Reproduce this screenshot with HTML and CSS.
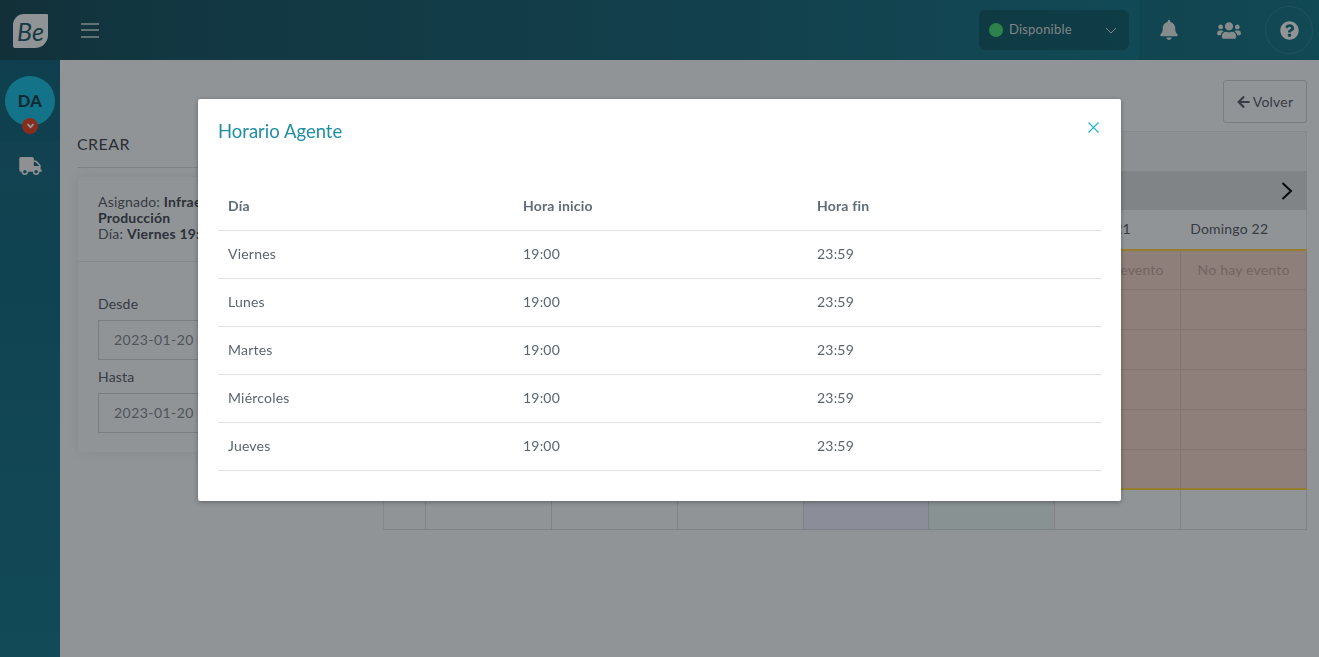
FILE: index.html
```html
<!DOCTYPE html>
<html lang="es">
<head>
<meta charset="utf-8">
<title>Horario Agente</title>
<link rel="stylesheet" href="styles.css">
</head>
<body>
<div class="app">
  <header class="topbar">
    <div class="brand">
      <div class="logo"><span>Be</span></div>
      <button class="burger" aria-label="Menú"><i></i><i></i><i></i></button>
    </div>
    <div class="status">
      <span class="dot"></span>
      <span class="status-label">Disponible</span>
      <svg class="status-caret" viewBox="0 0 12 7"><path d="M1 1l5 5 5-5" fill="none" stroke="currentColor" stroke-width="1"/></svg>
    </div>
    <div class="top-icons">
      <div class="top-icon"><svg class="ic-bell" viewBox="0 0 448 512"><path fill="currentColor" d="M224 512c35.32 0 63.97-28.65 63.97-64H160.03c0 35.35 28.65 64 63.97 64zm215.39-149.71c-19.32-20.76-55.47-51.99-55.47-154.29 0-77.7-54.48-139.9-127.94-155.16V32c0-17.67-14.32-32-31.98-32s-31.98 14.33-31.98 32v20.84C118.56 68.1 64.08 130.3 64.08 208c0 102.3-36.15 133.53-55.47 154.29-6 6.45-8.66 14.16-8.61 21.71.11 16.4 12.98 32 32.1 32h383.8c19.12 0 32-15.6 32.1-32 .05-7.55-2.61-15.27-8.61-21.71z"/></svg></div>
      <div class="top-icon"><svg class="ic-users" viewBox="0 0 640 512"><path fill="currentColor" d="M96 224c35.3 0 64-28.7 64-64s-28.7-64-64-64-64 28.7-64 64 28.7 64 64 64zm448 0c35.3 0 64-28.7 64-64s-28.7-64-64-64-64 28.7-64 64 28.7 64 64 64zm32 32h-64c-17.6 0-33.5 7.1-45.1 18.6 40.3 22.1 68.9 62 75.1 109.4h66c17.7 0 32-14.3 32-32v-32c0-35.3-28.7-64-64-64zm-256 0c61.9 0 112-50.1 112-112S381.9 32 320 32 208 82.1 208 144s50.1 112 112 112zm76.8 32h-8.3c-20.8 10-43.9 16-68.5 16s-47.6-6-68.5-16h-8.3C179.6 288 128 339.6 128 403.2V432c0 26.5 21.5 48 48 48h288c26.5 0 48-21.5 48-48v-28.8c0-63.6-51.6-115.2-115.2-115.2zm-223.7-13.4C161.5 263.1 145.6 256 128 256H64c-35.3 0-64 28.7-64 64v32c0 17.7 14.3 32 32 32h65.9c6.3-47.4 34.9-87.3 75.2-109.4z"/></svg></div>
      <div class="top-icon help"><svg class="ic-help" viewBox="0 0 512 512"><path fill="currentColor" d="M504 256c0 136.997-111.043 248-248 248S8 392.997 8 256C8 119.083 119.043 8 256 8s248 111.083 248 248zM262.655 90c-54.497 0-89.255 22.957-116.549 63.758-3.536 5.286-2.353 12.415 2.715 16.258l34.699 26.31c5.205 3.947 12.621 3.008 16.665-2.122 17.864-22.658 30.113-35.797 57.303-35.797 20.429 0 45.698 13.148 45.698 32.958 0 14.976-12.363 22.667-32.534 33.976C247.128 238.528 216 254.941 216 296v4c0 6.627 5.373 12 12 12h56c6.627 0 12-5.373 12-12v-1.333c0-28.462 83.186-29.647 83.186-106.667 0-58.002-60.165-102-116.531-102zM256 338c-25.365 0-46 20.635-46 46 0 25.364 20.635 46 46 46s46-20.636 46-46c0-25.365-20.635-46-46-46z"/></svg></div>
    </div>
  </header>
  <div class="shell">
    <nav class="sidebar">
      <div class="avatar">DA
        <span class="avatar-badge"><svg viewBox="0 0 12 8"><path d="M2 1.500l4 4 4-4" fill="none" stroke="currentColor" stroke-width="2.400"/></svg></span>
      </div>
      <div class="side-item"><svg class="ic-truck" viewBox="0 0 640 512"><path fill="currentColor" d="M624 352h-16V243.900c0-12.700-5.100-24.900-14.100-33.900L494 110.100c-9-9-21.200-14.100-33.900-14.100H416V48c0-26.500-21.500-48-48-48H48C21.500 0 0 21.500 0 48v320c0 26.500 21.500 48 48 48h16c0 53 43 96 96 96s96-43 96-96h128c0 53 43 96 96 96s96-43 96-96h48c8.800 0 16-7.200 16-16v-32c0-8.800-7.200-16-16-16zM160 464c-26.500 0-48-21.500-48-48s21.500-48 48-48 48 21.500 48 48-21.500 48-48 48zm320 0c-26.500 0-48-21.500-48-48s21.500-48 48-48 48 21.500 48 48-21.500 48-48 48zm80-208H416V144h44.100l99.900 99.900V256z"/></svg></div>
    </nav>
    <main class="main">
      <div class="main-actions">
        <button class="back-btn"><svg class="ic-arrow" viewBox="0 0 448 512"><path fill="currentColor" d="M257.500 445.100l-22.200 22.200c-9.400 9.400-24.600 9.400-33.900 0L7 273c-9.400-9.400-9.400-24.600 0-33.900L201.400 44.700c9.400-9.400 24.600-9.400 33.900 0l22.200 22.200c9.500 9.500 9.300 25-.4 34.300L136.600 216H424c13.300 0 24 10.700 24 24v32c0 13.300-10.700 24-24 24H136.600l120.500 114.800c9.800 9.300 10 24.800.4 34.300z"/></svg>Volver</button>
      </div>
      <div class="columns">
        <section class="create">
          <h2 class="create-title">CREAR</h2>
          <div class="create-card">
            <div class="card-info">Asignado: <b>Infraestructura</b><br><b>Producción</b><br>Día: <b>Viernes 19:00</b></div>
            <div class="card-form">
              <label class="field-label">Desde</label>
              <div class="field">2023-01-20 19:00</div>
              <label class="field-label">Hasta</label>
              <div class="field">2023-01-20 23:59</div>
            </div>
          </div>
        </section>
        <section class="calendar">
          <div class="cal-title"></div>
          <div class="cal-nav"><svg class="ic-next" viewBox="0 0 12 20"><path d="M1.500 2l8.500 8-8.500 8" fill="none" stroke="currentColor" stroke-width="2"/></svg></div>
          <div class="cal-grid">
            <div class="cal-head"></div><div class="cal-head">Lunes 16</div><div class="cal-head">Martes 17</div><div class="cal-head">Miércoles 18</div><div class="cal-head">Jueves 19</div><div class="cal-head">Viernes 20</div><div class="cal-head">Sábado 21</div><div class="cal-head">Domingo 22</div>
          </div>
          <div class="cal-grid cal-band">
            <div class="cell"></div><div class="cell">No hay evento</div><div class="cell">No hay evento</div><div class="cell">No hay evento</div><div class="cell">No hay evento</div><div class="cell">No hay evento</div><div class="cell">No hay evento</div><div class="cell">No hay evento</div>
            <div class="cell"></div><div class="cell"></div><div class="cell"></div><div class="cell"></div><div class="cell"></div><div class="cell"></div><div class="cell"></div><div class="cell"></div>
            <div class="cell"></div><div class="cell"></div><div class="cell"></div><div class="cell"></div><div class="cell"></div><div class="cell"></div><div class="cell"></div><div class="cell"></div>
            <div class="cell"></div><div class="cell"></div><div class="cell"></div><div class="cell"></div><div class="cell"></div><div class="cell"></div><div class="cell"></div><div class="cell"></div>
            <div class="cell"></div><div class="cell"></div><div class="cell"></div><div class="cell"></div><div class="cell"></div><div class="cell"></div><div class="cell"></div><div class="cell"></div>
            <div class="cell"></div><div class="cell"></div><div class="cell"></div><div class="cell"></div><div class="cell"></div><div class="cell"></div><div class="cell"></div><div class="cell"></div>
          </div>
          <div class="cal-grid">
            <div class="cell"></div><div class="cell"></div><div class="cell"></div><div class="cell"></div><div class="cell tint-blue"></div><div class="cell tint-green"></div><div class="cell"></div><div class="cell"></div>
          </div>
        </section>
      </div>
    </main>
  </div>
</div>
<div class="backdrop">
  <div class="modal" role="dialog">
    <div class="modal-head">
      <h3 class="modal-title">Horario Agente</h3>
      <svg class="modal-close" viewBox="0 0 11 11"><path d="M.5.5l10 10M10.500.5l-10 10" fill="none" stroke="currentColor" stroke-width="1.200"/></svg>
    </div>
    <table class="hours">
      <thead><tr><th>Día</th><th>Hora inicio</th><th>Hora fin</th></tr></thead>
      <tbody>
        <tr><td>Viernes</td><td>19:00</td><td>23:59</td></tr>
        <tr><td>Lunes</td><td>19:00</td><td>23:59</td></tr>
        <tr><td>Martes</td><td>19:00</td><td>23:59</td></tr>
        <tr><td>Miércoles</td><td>19:00</td><td>23:59</td></tr>
        <tr><td>Jueves</td><td>19:00</td><td>23:59</td></tr>
      </tbody>
    </table>
  </div>
</div>
</body>
</html>
```

FILE: styles.css
```css
* { box-sizing: border-box; }
html, body { margin: 0; height: 100%; overflow: hidden; }
body { font-family: "Lato", "Noto Sans", sans-serif; font-size: 14px; letter-spacing: .2px; color: #5a6470; background: #f2f7fc; }
svg { display: block; }
button { font: inherit; letter-spacing: inherit; background: none; padding: 0; }

.app { display: flex; flex-direction: column; height: 657px; }

.topbar { height: 60px; flex: none; display: flex; align-items: center; background: linear-gradient(90deg, #1e505e 0, #1f5b6c 10%, #1e6a7e 50%, #1f8296 100%); }
.brand { display: flex; align-items: center; flex: 1; padding-left: 13px; }
.logo { width: 35px; height: 34px; margin-top: 2px; background: #f2f7fc; border-radius: 11px 1px 13px 2px; display: flex; align-items: center; justify-content: center; }
.logo span { font-style: italic; font-size: 25px; letter-spacing: 0; color: #2a5f70; line-height: 1; }
.burger { margin-left: 33px; width: 18px; border: 0; display: flex; flex-direction: column; gap: 4.500px; }
.burger i { display: block; height: 2px; background: #fff; opacity: .6; }

.status { width: 150px; height: 40px; border-radius: 6px; background: rgba(0,0,0,.17); display: flex; align-items: center; padding: 0 12px 0 10px; margin-right: 10px; color: #d4dcdf; }
.dot { width: 14px; height: 14px; border-radius: 50%; background: #4bd97f; margin-top: -1px; }
.status-label { margin-left: 6px; flex: 1; font-size: 13px; margin-top: -2px; }
.status-caret { width: 12px; height: 7px; }
.top-icons { width: 180px; height: 60px; display: flex; align-items: center; background: rgba(0,0,0,.06); color: #e0e8ea; }
.top-icon { width: 60px; height: 60px; display: flex; align-items: center; justify-content: center; }
.help { width: 48px; height: 48px; margin-left: 6px; border-radius: 50%; border: 1px solid rgba(255,255,255,.11); color: #f2f5f7; }
.ic-bell { width: 18px; height: 20px; }
.ic-users { width: 24px; height: 19px; }
.ic-help { width: 19px; height: 19px; }

.shell { flex: 1; display: flex; min-height: 0; }
.sidebar { width: 60px; flex: none; background: linear-gradient(180deg, #1a6a82, #1f7c92); display: flex; flex-direction: column; align-items: center; padding-top: 16px; }
.avatar { position: relative; width: 50px; height: 50px; border-radius: 50%; background: #21c2e4; color: #17495a; font-weight: 900; font-size: 16.500px; letter-spacing: .4px; display: flex; align-items: center; justify-content: center; }
.avatar-badge { position: absolute; left: 17px; bottom: -8px; width: 16px; height: 16px; border-radius: 50%; background: #e24b33; color: #fff; display: flex; align-items: center; justify-content: center; }
.avatar-badge svg { width: 9px; height: 6px; }
.side-item { margin-top: 15px; width: 60px; height: 50px; display: flex; align-items: center; justify-content: center; color: #eef1f2; background: rgba(255,255,255,.02); }
.ic-truck { width: 23px; height: 18px; }

.main { flex: 1; min-width: 0; padding: 20px 12px 0 17px; }
.main-actions { display: flex; justify-content: flex-end; margin-bottom: 8px; }
.back-btn { width: 84px; height: 43px; border: 1px solid #c8d0d8; border-radius: 3px; color: #5a6470; font-size: 14px; display: flex; align-items: center; justify-content: center; gap: 3px; }
.ic-arrow { width: 13px; height: 14px; }
.columns { display: flex; gap: 12px; align-items: flex-start; }

.create { width: 294px; flex: none; }
.create-title { margin: 0; height: 37px; padding-top: 3px; font-size: 16px; font-weight: 400; letter-spacing: .4px; line-height: 20px; color: #4a4f58; border-bottom: 1px solid #d5d8dc; }
.create-card { margin: 9px 0 0 1px; height: 275px; background: #f2f7fc; border-radius: 4px; box-shadow: 0 0 12px rgba(0,0,0,.08); }
.card-info { height: 85px; padding: 17px 20px 0; line-height: 16px; font-size: 14px; border-bottom: 1px solid #e2e5e9; }
.card-info b { color: #4a5260; }
.card-form { padding: 33px 20px 0; }
.field-label { display: block; line-height: 18px; margin-bottom: 7px; }
.field { height: 40px; border: 1px solid #ccd2d8; padding: 0 15px; line-height: 38px; font-size: 14px; letter-spacing: .45px; color: #858d96; margin-bottom: 8px; }

.calendar { flex: 1; min-width: 0; border: solid #dfe4e8; border-width: 1px 0 0 1px; }
.cal-title { height: 39px; background: #ebf0f3; border-right: 1px solid #dfe4e8; }
.cal-nav { height: 39px; background: #d6dcdf; display: flex; align-items: center; justify-content: flex-end; padding-right: 13px; color: #111; border-right: 1px solid #d6dcdf; }
.ic-next { width: 12px; height: 20px; }
.cal-grid { display: grid; grid-template-columns: 42px repeat(7, 1fr); }
.cal-head { height: 39px; line-height: 38px; padding-left: 9px; color: #5a6470; font-size: 14px; }
.cal-head:last-child { border-right: 1px solid #dfe4e8; }
.cell { height: 40px; border: solid #d4dade; border-width: 0 1px 1px 0; line-height: 39px; text-align: center; color: #bda9a4; font-size: 14px; }
.cal-band { background: #eed4cb; border-top: 2px solid #f7d34a; border-bottom: 2px solid #f7d34a; }
.cal-band .cell { border-color: #dcc2b9; }
.cal-band .cell:nth-child(-n+8) { height: 39px; line-height: 38px; }
.cal-band .cell:nth-last-child(-n+8) { height: 38px; border-bottom: 0; }
.tint-blue { background: #e8edfd; }
.tint-green { background: #e4f3f3; }

.backdrop { position: fixed; inset: 0; background: rgba(0,0,0,.4); display: flex; justify-content: center; align-items: flex-start; padding-top: 99px; }
.modal { width: 923px; height: 402px; background: #fff; border-radius: 2px; padding: 0 20px; box-shadow: 0 1px 5px rgba(0,0,0,.35); }
.modal-head { height: 84px; display: flex; justify-content: space-between; align-items: flex-start; padding-top: 20px; }
.modal-title { margin: 0; font-size: 18.500px; font-weight: 400; letter-spacing: 0; line-height: 24px; color: #1f8fa3; }
.modal-close { width: 11px; height: 11px; color: #21b6d0; margin: 3px 2px 0 0; }
.hours { width: 100%; border-collapse: collapse; table-layout: fixed; font-size: 14px; color: #5a6470; }
.hours th:nth-child(1) { width: 295px; }
.hours th { height: 47px; text-align: left; font-weight: 700; padding: 0 10px 2px; border-bottom: 1px solid #dee2e6; color: #5f6b78; }
.hours td { height: 48px; padding: 0 10px 2px; border-bottom: 1px solid #dee2e6; }
```
